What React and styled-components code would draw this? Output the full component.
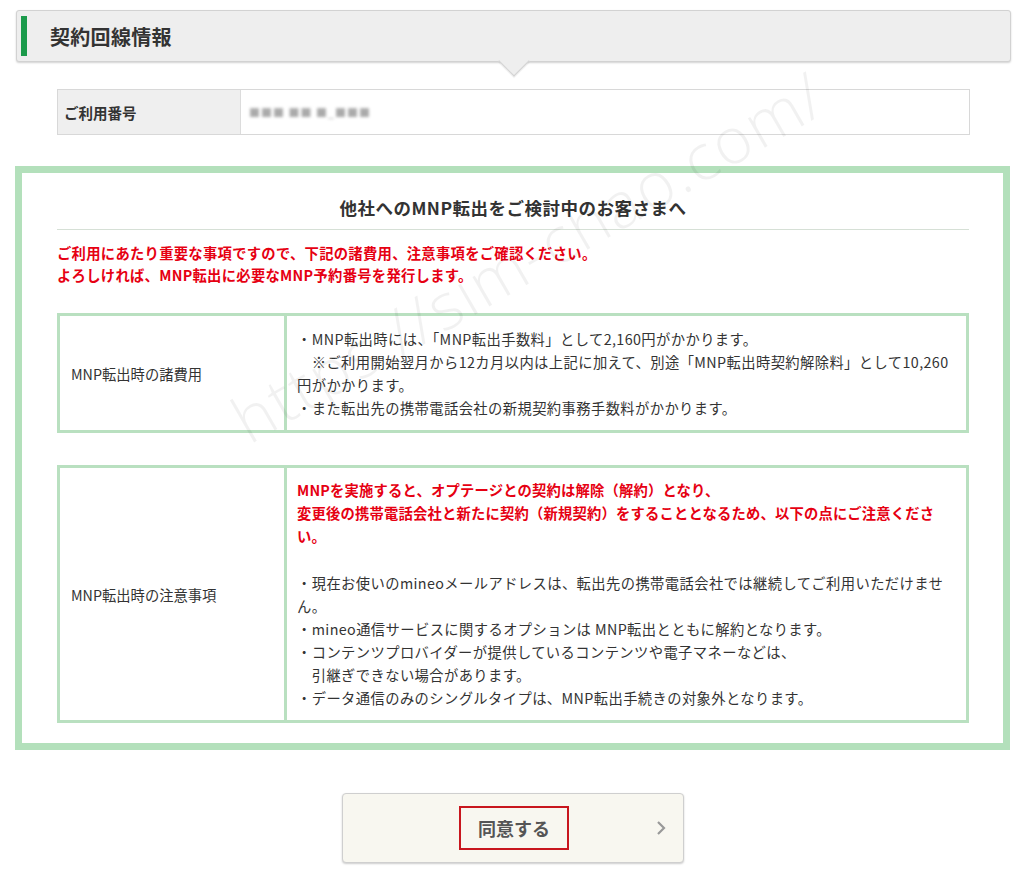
import React from "react";
import styled, { createGlobalStyle } from "styled-components";

const Global = createGlobalStyle`
  html, body { margin: 0; padding: 0; background: #fff; }
  body { font-family: "Noto Sans CJK JP", "Noto Sans", sans-serif; color: #333; }
`;

const Page = styled.div`
  position: relative;
  width: 996px;
  padding: 10px 0 40px 15px;
`;

const SectionHeader = styled.div`
  position: relative;
  margin-left: 1px;
  height: 50px;
  background: #eeeeee;
  border: 1px solid #d2d2d2;
  border-radius: 3px;
  box-shadow: 0 1px 2px rgba(0, 0, 0, 0.18);
  display: flex;
  align-items: center;
  gap: 23px;
  padding-left: 4px;
  &::after {
    content: "";
    position: absolute;
    left: 50%;
    bottom: -11px;
    width: 21px;
    height: 21px;
    margin-left: -11px;
    background: #eeeeee;
    border-right: 1px solid #d2d2d2;
    border-bottom: 1px solid #d2d2d2;
    box-shadow: 1px 1px 1px rgba(0, 0, 0, 0.08);
    transform: rotate(45deg);
  }
`;

const GreenBar = styled.span`
  width: 6px;
  height: 40px;
  background: #1b9a4b;
`;

const HeaderTitle = styled.h2`
  margin: 0;
  font-size: 20px;
  font-weight: 700;
  color: #333;
  letter-spacing: 0.3px;
`;

const InfoRow = styled.div`
  margin: 27px 41px 0 42px;
  height: 44px;
  border: 1px solid #d8d8d8;
  display: flex;
`;

const InfoLabel = styled.div`
  width: 176px;
  background: #efefef;
  border-right: 1px solid #dcdcdc;
  display: flex;
  align-items: center;
  padding-left: 6px;
  font-size: 14.5px;
  font-weight: 700;
  color: #333;
`;

const InfoValue = styled.div`
  display: flex;
  align-items: center;
  padding-left: 8px;
  font-size: 11px;
  color: #aaa;
  filter: blur(1.6px);
  letter-spacing: 1px;
`;

const NoticeBox = styled.div`
  margin-top: 31px;
  width: 995px;
  box-sizing: border-box;
  border: 7px solid #b3e0bb;
  padding: 23px 34px 20px 35px;
`;

const NoticeTitle = styled.h3`
  margin: 0;
  text-align: center;
  font-size: 17.5px;
  font-weight: 700;
  line-height: 24px;
  letter-spacing: 0.5px;
  padding-bottom: 9px;
  border-bottom: 1px solid #d6e0d6;
  color: #333;
`;

const Lead = styled.p`
  margin: 12px 0 0;
  font-size: 14.3px;
  line-height: 22px;
  letter-spacing: 0.3px;
  font-weight: 700;
  color: #e60012;
`;

const InfoTable = styled.div`
  display: grid;
  grid-template-columns: 227px 1fr;
  border: 3px solid #b9e0c0;
  margin-top: ${(p) => p.$gap}px;
`;

const LabelCell = styled.div`
  border-right: 3px solid #b9e0c0;
  display: flex;
  align-items: center;
  padding-left: 11px;
  font-size: 14.3px;
  color: #333;
`;

const BodyCell = styled.div`
  padding: 11px 10px 11px 10px;
  font-size: 14.3px;
  line-height: 23px;
  letter-spacing: 0.4px;
  color: #333;
`;

const Line = styled.span`
  display: block;
  white-space: nowrap;
  min-height: 23px;
  color: ${(p) => (p.$red ? "#e60012" : "#333")};
  font-weight: ${(p) => (p.$red ? 700 : 400)};
  line-height: ${(p) => (p.$red ? "22px" : "23px")};
  letter-spacing: ${(p) => (p.$red ? "0.2px" : "0.4px")};
`;

const ButtonWrap = styled.div`
  display: flex;
  justify-content: center;
  margin-top: 43px;
`;

const AgreeButton = styled.button`
  position: relative;
  width: 342px;
  height: 70px;
  background: #f8f7f0;
  border: 1px solid #cfcfcf;
  border-radius: 4px;
  box-shadow: 0 1px 2px rgba(0, 0, 0, 0.2);
  display: flex;
  align-items: center;
  justify-content: center;
  padding: 0;
  cursor: pointer;
  font-family: inherit;
`;

const AgreeLabel = styled.span`
  width: 106px;
  height: 40px;
  border: 2px solid #c8161e;
  display: flex;
  align-items: center;
  justify-content: center;
  font-size: 18px;
  font-weight: 700;
  color: #555;
  margin-left: 2px;
`;

const Chevron = styled.svg`
  position: absolute;
  right: 17px;
  top: 50%;
  margin-top: -8px;
`;

const Watermark = styled.div`
  position: absolute;
  left: 528px;
  top: 256px;
  transform: translate(-50%, -50%) rotate(-30deg);
  font-family: "Open Sans", "DejaVu Sans", sans-serif;
  font-weight: 300;
  font-size: 64px;
  letter-spacing: 2px;
  color: rgba(0, 0, 0, 0.055);
  white-space: nowrap;
  pointer-events: none;
`;

export default function App() {
  return (
    <>
      <Global />
      <Page>
        <SectionHeader>
          <GreenBar />
          <HeaderTitle>契約回線情報</HeaderTitle>
        </SectionHeader>

        <InfoRow>
          <InfoLabel>ご利用番号</InfoLabel>
          <InfoValue>■■■ ■■ ■_■■■</InfoValue>
        </InfoRow>

        <NoticeBox>
          <NoticeTitle>他社へのMNP転出をご検討中のお客さまへ</NoticeTitle>
          <Lead>
            ご利用にあたり重要な事項ですので、下記の諸費用、注意事項をご確認ください。
            <br />
            よろしければ、MNP転出に必要なMNP予約番号を発行します。
          </Lead>

          <InfoTable $gap={27}>
            <LabelCell>MNP転出時の諸費用</LabelCell>
            <BodyCell>
              <Line>・MNP転出時には、「MNP転出手数料」として2,160円がかかります。</Line>
              <Line>　※ご利用開始翌月から12カ月以内は上記に加えて、別途「MNP転出時契約解除料」として10,260</Line>
              <Line>円がかかります。</Line>
              <Line>・また転出先の携帯電話会社の新規契約事務手数料がかかります。</Line>
            </BodyCell>
          </InfoTable>

          <InfoTable $gap={32}>
            <LabelCell>MNP転出時の注意事項</LabelCell>
            <BodyCell>
              <Line $red>MNPを実施すると、オプテージとの契約は解除（解約）となり、</Line>
              <Line $red>変更後の携帯電話会社と新たに契約（新規契約）をすることとなるため、以下の点にご注意くださ</Line>
              <Line $red>い。</Line>
              <Line />
              <Line>・現在お使いのmineoメールアドレスは、転出先の携帯電話会社では継続してご利用いただけませ</Line>
              <Line>ん。</Line>
              <Line>・mineo通信サービスに関するオプションは MNP転出とともに解約となります。</Line>
              <Line>・コンテンツプロバイダーが提供しているコンテンツや電子マネーなどは、</Line>
              <Line>　引継ぎできない場合があります。</Line>
              <Line>・データ通信のみのシングルタイプは、MNP転出手続きの対象外となります。</Line>
            </BodyCell>
          </InfoTable>
        </NoticeBox>

        <ButtonWrap>
          <AgreeButton type="button">
            <AgreeLabel>同意する</AgreeLabel>
            <Chevron width="10" height="16" viewBox="0 0 10 16">
              <path d="M2 2 L8 8 L2 14" fill="none" stroke="#999" strokeWidth="2.2" />
            </Chevron>
          </AgreeButton>
        </ButtonWrap>

        <Watermark>https://sim-chao.com/</Watermark>
      </Page>
    </>
  );
}
